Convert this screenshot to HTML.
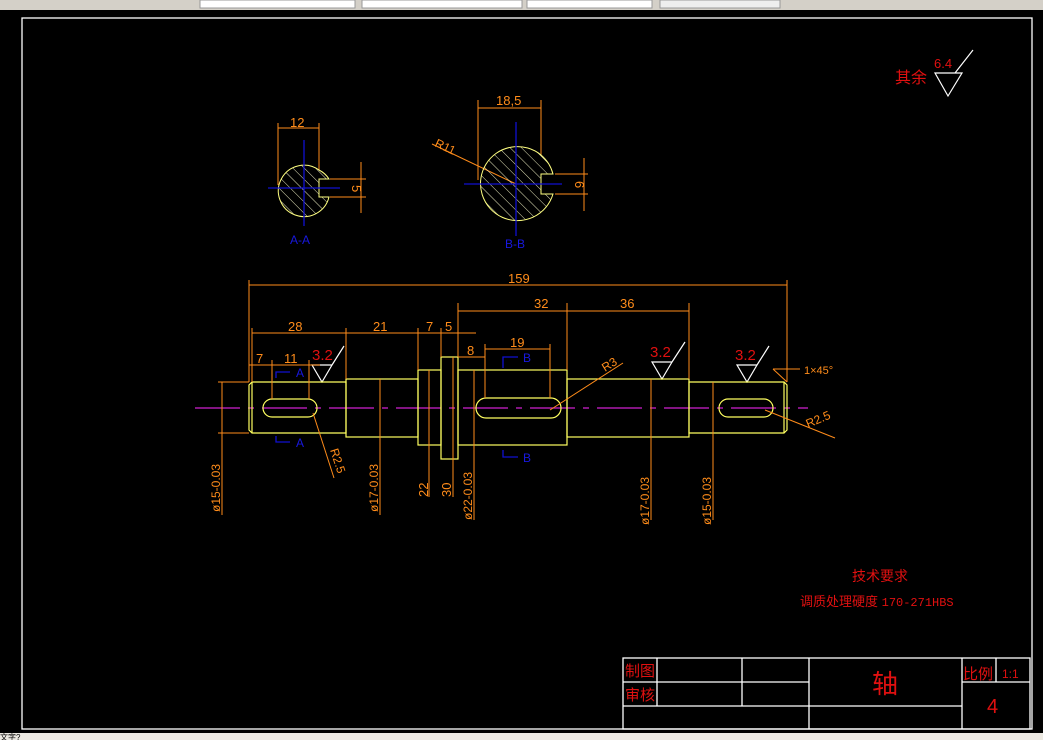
<!DOCTYPE html>
<html><head><meta charset="utf-8"><style>
html,body{margin:0;padding:0;width:1043px;height:740px;overflow:hidden;background:#000}
svg{display:block}
text{font-family:"Liberation Sans","Noto Sans CJK SC",sans-serif}
</style></head><body>
<svg width="1043" height="740" viewBox="0 0 1043 740" xmlns="http://www.w3.org/2000/svg">
<defs>
<pattern id="h" width="8" height="8" patternUnits="userSpaceOnUse" patternTransform="rotate(-45)">
<line x1="0" y1="0" x2="0" y2="8" stroke="#ffffd0" stroke-width="0.9"/></pattern>
</defs>
<rect x="0" y="0" width="1043" height="10" fill="#d4d0c8"/>
<rect x="200" y="0" width="155" height="8" fill="#fff" stroke="#999"/>
<rect x="362" y="0" width="160" height="8" fill="#fff" stroke="#999"/>
<rect x="527" y="0" width="125" height="8" fill="#fff" stroke="#999"/>
<rect x="660" y="0" width="120" height="8" fill="#eee" stroke="#999"/>
<rect x="0" y="733" width="1043" height="7" fill="#ece9e2"/>
<text x="0" y="740" font-size="8" fill="#000">文字?</text>
<rect x="22" y="18" width="1010" height="711" fill="none" stroke="#fff" stroke-width="1.3"/>
<g stroke="#fff" stroke-width="1.3" fill="none">
<rect x="623" y="658" width="407" height="71"/>
<line x1="623" y1="682" x2="809" y2="682"/><line x1="623" y1="706" x2="962" y2="706"/>
<line x1="657" y1="658" x2="657" y2="706"/><line x1="742" y1="658" x2="742" y2="706"/>
<line x1="809" y1="658" x2="809" y2="729"/><line x1="962" y1="658" x2="962" y2="729"/>
<line x1="996" y1="658" x2="996" y2="682"/><line x1="962" y1="682" x2="1030" y2="682"/>
</g>
<g fill="#e01010">
<text x="625" y="676" font-size="15">制图</text>
<text x="625" y="700" font-size="15">审核</text>
<text x="872" y="693" font-size="26">轴</text>
<text x="963" y="679" font-size="15">比例</text>
<text x="1002" y="678" font-size="12" font-family="Liberation Mono">1:1</text>
<text x="987" y="713" font-size="20">4</text>
<text x="852" y="581" font-size="14">技术要求</text>
<text x="800" y="606" font-size="13">调质处理硬度 <tspan font-family="Liberation Mono" font-size="12">170-271HBS</tspan></text>
<text x="895" y="83" font-size="16">其余</text>
<text x="934" y="68" font-size="13">6.4</text>
<text x="312" y="360" font-size="15">3.2</text>
<text x="650" y="357" font-size="15">3.2</text>
<text x="735" y="360" font-size="15">3.2</text>
</g>
<g stroke="#fff" stroke-width="1.2" fill="none">
<path d="M935 73 L962 73 L948 96 Z M955 73 L973 50"/>
<path d="M312 365 L332 365 L322 382 Z M332 365 L344 346"/>
<path d="M652 362 L672 362 L662 379 Z M672 362 L685 342"/>
<path d="M737 365 L757 365 L747 382 Z M757 365 L769 346"/>
</g>
<line x1="195" y1="408" x2="808" y2="408" stroke="#d020d0" stroke-width="1.3" stroke-dasharray="45,8,6,8"/>
<g stroke="#ffff60" stroke-width="1.2" fill="none">
<path d="M252 382 L346 382 L346 433 L252 433 L249 430 L249 385 Z"/>
<line x1="252" y1="382" x2="252" y2="433"/>
<rect x="346" y="379" width="72" height="58"/>
<rect x="418" y="370" width="23" height="75"/>
<rect x="441" y="357" width="17" height="102"/>
<rect x="458" y="370" width="109" height="75"/>
<rect x="567" y="379" width="122" height="58"/>
<path d="M689 382 L784 382 L787 385 L787 430 L784 433 L689 433 Z"/>
<line x1="784" y1="382" x2="784" y2="433"/>
<rect x="263" y="399" width="54" height="18" rx="9"/>
<rect x="476" y="398" width="85" height="20" rx="10"/>
<rect x="719" y="399" width="54" height="18" rx="9"/>
</g>
<g stroke="#ff8c1a" stroke-width="1" fill="none">
<line x1="249" y1="280" x2="249" y2="382"/><line x1="787" y1="280" x2="787" y2="382"/>
<line x1="249" y1="285" x2="787" y2="285"/>
<line x1="458" y1="303" x2="458" y2="357"/><line x1="567" y1="303" x2="567" y2="370"/><line x1="689" y1="303" x2="689" y2="379"/>
<line x1="458" y1="311" x2="689" y2="311"/>
<line x1="252" y1="328" x2="252" y2="382"/><line x1="346" y1="328" x2="346" y2="379"/><line x1="418" y1="328" x2="418" y2="370"/><line x1="441" y1="328" x2="441" y2="357"/>
<line x1="252" y1="333" x2="476" y2="333"/>
<line x1="272" y1="360" x2="272" y2="399"/><line x1="309" y1="360" x2="309" y2="399"/>
<line x1="249" y1="365" x2="320" y2="365"/>
<line x1="458" y1="357" x2="485" y2="357"/>
<line x1="485" y1="344" x2="485" y2="398"/><line x1="550" y1="344" x2="550" y2="398"/>
<line x1="485" y1="349" x2="550" y2="349"/>
<line x1="218" y1="382" x2="249" y2="382"/><line x1="218" y1="433" x2="249" y2="433"/>
<line x1="222" y1="382" x2="222" y2="515"/>
<line x1="380" y1="379" x2="380" y2="515"/>
<line x1="429" y1="370" x2="429" y2="497"/>
<line x1="453" y1="357" x2="453" y2="497"/>
<line x1="474" y1="370" x2="474" y2="520"/>
<line x1="651" y1="379" x2="651" y2="520"/>
<line x1="713" y1="382" x2="713" y2="520"/>
<line x1="313" y1="413" x2="334" y2="478"/>
<line x1="550" y1="410" x2="623" y2="363"/>
<line x1="765" y1="410" x2="835" y2="438"/>
<path d="M773 369 L800 369 M773 369 L787 382"/>
<line x1="278" y1="123" x2="278" y2="185"/><line x1="319" y1="123" x2="319" y2="170"/>
<line x1="278" y1="128" x2="319" y2="128"/>
<line x1="330" y1="179" x2="366" y2="179"/><line x1="330" y1="197" x2="366" y2="197"/>
<line x1="361" y1="162" x2="361" y2="213"/>
<line x1="478" y1="100" x2="478" y2="180"/><line x1="541" y1="100" x2="541" y2="155"/>
<line x1="478" y1="108" x2="541" y2="108"/>
<line x1="555" y1="174" x2="588" y2="174"/><line x1="555" y1="194" x2="588" y2="194"/>
<line x1="584" y1="158" x2="584" y2="211"/>
<line x1="432" y1="144" x2="516" y2="184"/>
</g>
<g fill="#ff8c1a" font-size="13" font-family="Liberation Sans">
<text x="508" y="283">159</text><text x="534" y="308">32</text><text x="620" y="308">36</text>
<text x="288" y="331">28</text><text x="373" y="331">21</text><text x="426" y="331">7</text><text x="445" y="331">5</text>
<text x="256" y="363">7</text><text x="284" y="363">11</text><text x="467" y="355">8</text><text x="510" y="347">19</text>
<text x="290" y="127">12</text><text x="496" y="105">18,5</text>
<text x="804" y="374" font-size="11">1×45°</text>
<text transform="translate(352,185) rotate(90)" x="0" y="0">5</text>
<text transform="translate(575,181) rotate(90)" x="0" y="0">6</text>
<text transform="translate(434,146) rotate(25)" font-size="12">R11</text>
<text transform="translate(605,372) rotate(-32)" font-size="12">R3</text>
<text transform="translate(808,428) rotate(-23) " font-size="12">R2.5</text>
<text transform="translate(330,450) rotate(72)" font-size="12">R2.5</text>
<text transform="translate(428,497) rotate(-90)" font-size="13">22</text>
<text transform="translate(451,497) rotate(-90)" font-size="13">30</text>
<text transform="translate(220,512) rotate(-90)" font-size="12">ø15-0.03</text>
<text transform="translate(378,512) rotate(-90)" font-size="12">ø17-0.03</text>
<text transform="translate(472,520) rotate(-90)" font-size="12">ø22-0.03</text>
<text transform="translate(649,525) rotate(-90)" font-size="12">ø17-0.03</text>
<text transform="translate(711,525) rotate(-90)" font-size="12">ø15-0.03</text>
</g>
<path d="M319 170 A25.7 25.7 0 1 0 329 197 L319 197 L319 179 L329 179 A25.7 25.7 0 0 0 319 170 Z" fill="url(#h)" stroke="#ffff80" stroke-width="1"/>
<path d="M541 155 A37 37 0 1 0 553 194 L541 194 L541 174 L553 174 A37 37 0 0 0 541 155 Z" fill="url(#h)" stroke="#ffff80" stroke-width="1"/>
<g stroke="#1010d0" stroke-width="1.3" fill="none">
<line x1="268" y1="188" x2="340" y2="188"/><line x1="304" y1="140" x2="304" y2="226"/>
<line x1="464" y1="184" x2="562" y2="184"/><line x1="516" y1="122" x2="516" y2="236"/>
<path d="M276 378 L276 372 L290 372"/><path d="M276 436 L276 442 L290 442"/>
<path d="M503 368 L503 357 L518 357"/><path d="M503 450 L503 457 L518 457"/>
</g>
<g fill="#1818e0" font-size="12">
<text x="296" y="377">A</text><text x="296" y="447">A</text>
<text x="523" y="362">B</text><text x="523" y="462">B</text>
<text x="290" y="244">A-A</text><text x="505" y="248">B-B</text>
</g>
</svg>
</body></html>
